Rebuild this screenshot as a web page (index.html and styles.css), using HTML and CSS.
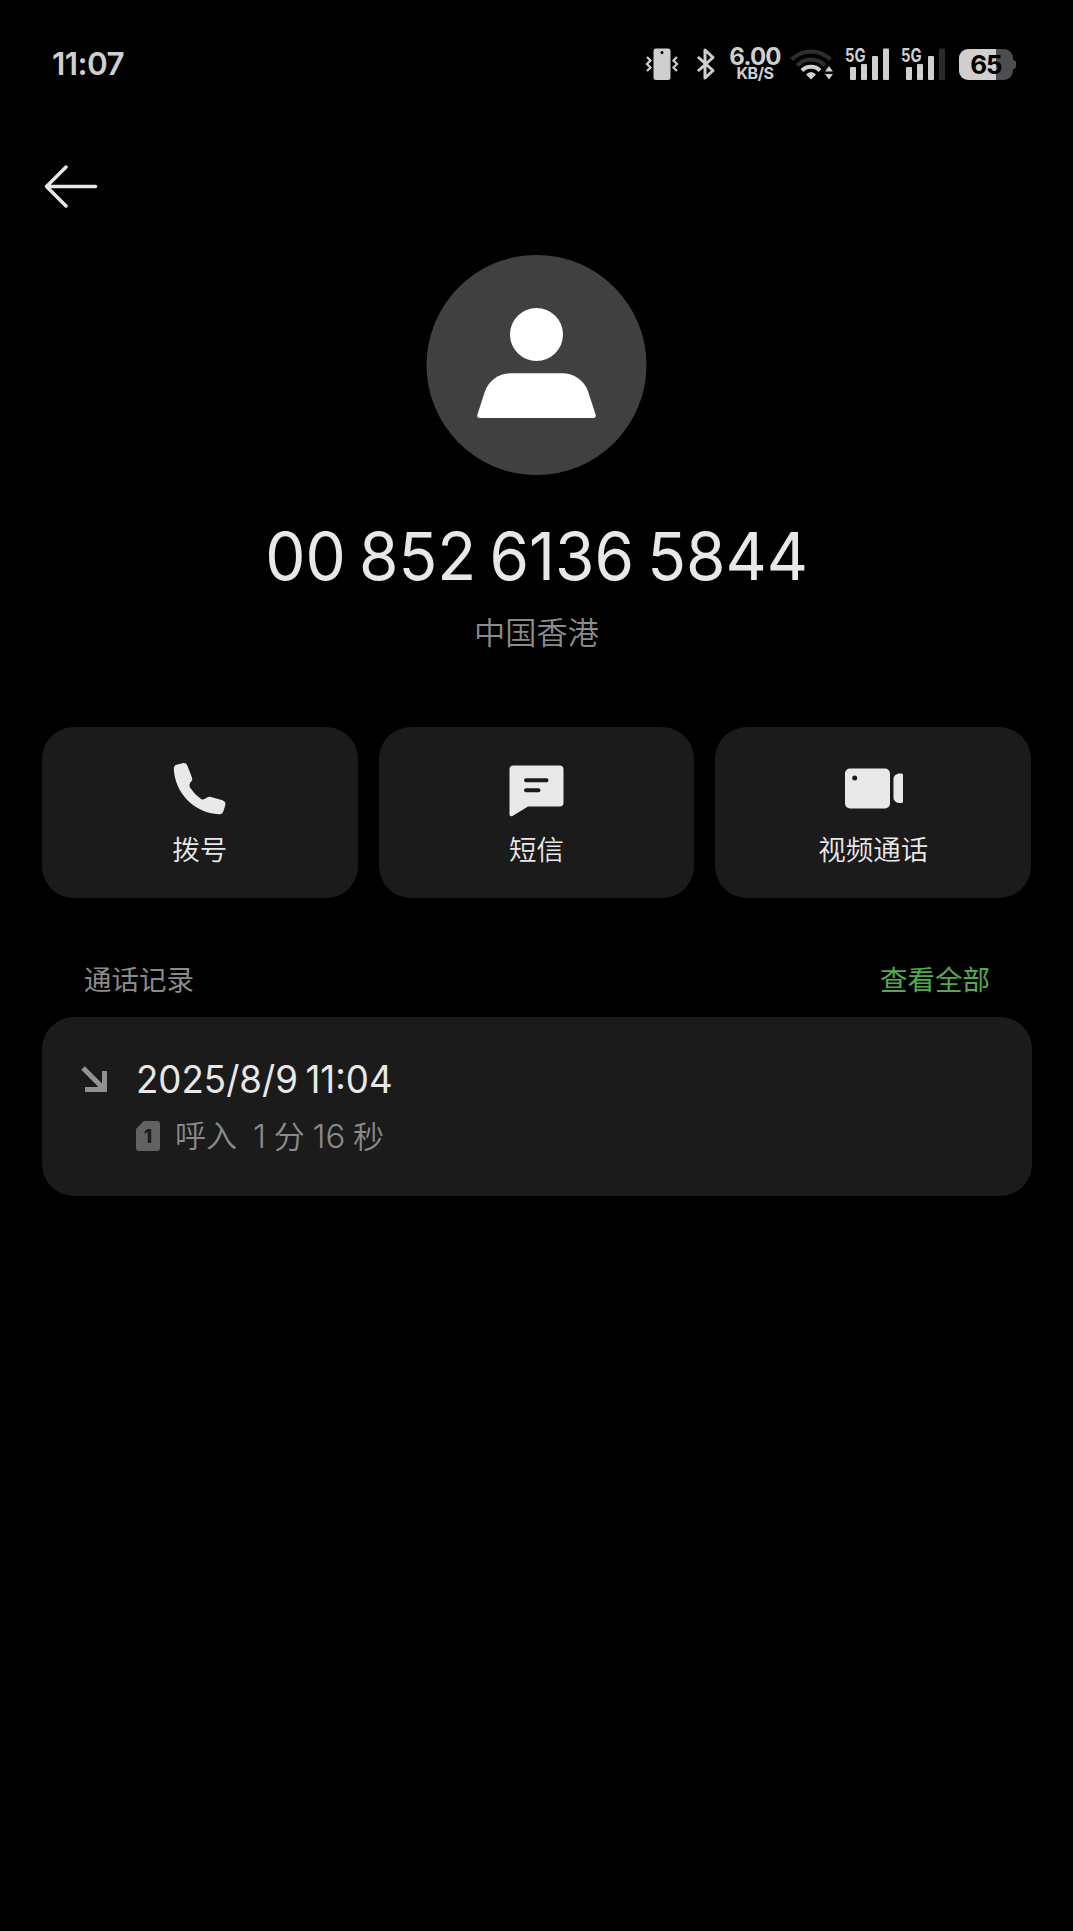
FILE: index.html
```
<!DOCTYPE html>
<html lang="zh-CN">
<head>
    <meta charset="UTF-8">
    <meta name="viewport" content="width=device-width, initial-scale=1.0">
    <title>通话详情</title>
    <link rel="stylesheet" href="styles.css">
</head>
<body>
    <div class="status">
        <span class="time">11:07</span>
        <div class="icons">
            <!-- 振动 -->
            <svg class="vibrate" width="34" height="34" viewBox="0 0 34 34">
                <rect x="8.500" y="1.500" width="17" height="31.500" rx="2.500" fill="#cfcfcf"/>
                <circle cx="17" cy="5.500" r="1.500" fill="#000"/>
                <path d="M2 10l3.500 3.500-3.500 3.500 3.500 3.500-3.500 3.500M32 10l-3.500 3.500 3.500 3.500-3.500 3.500 3.500 3.500" fill="none" stroke="#cfcfcf" stroke-width="2.200"/>
            </svg>
            <!-- 蓝牙 -->
            <svg class="bluetooth" width="20" height="34" viewBox="0 0 20 34">
                <path d="M2 10l15 13.500-8 7.500V3l8 7.500L2 24" fill="none" stroke="#cfcfcf" stroke-width="3" stroke-linejoin="round"/>
            </svg>
            <div class="speed">
                <b>6.00</b>
                <i>KB/S</i>
            </div>
            <svg class="wifi" width="44" height="34" viewBox="0 0 44 34">
                <path d="M1.500 12.500a27.500 27.500 0 0 1 39 0M7 18.500a19.500 19.500 0 0 1 28 0" fill="none" stroke="#2e2e2e" stroke-width="4"/>
                <path d="M12 23.500a12.500 12.500 0 0 1 18 0" fill="none" stroke="#cfcfcf" stroke-width="4"/>
                <path d="M16 27.500q5-5 10 0l-5 5zM35 24.500l4-5.500 4 5.500zM35 27l4 5.500 4-5.500z" fill="#cfcfcf"/>
            </svg>
            <div class="signal">
                <span>5G</span>
                <svg width="40" height="34" viewBox="0 0 40 34" fill="#cfcfcf">
                    <rect x="1" y="20" width="6" height="13" rx="1"/>
                    <rect x="12" y="17" width="6" height="16" rx="1"/>
                    <rect x="23" y="9" width="6" height="24" rx="1"/>
                    <rect x="34" y="1.500" width="6" height="31.500" rx="1"/>
                </svg>
            </div>
            <div class="signal second">
                <span>5G</span>
                <svg width="40" height="34" viewBox="0 0 40 34" fill="#cfcfcf">
                    <rect x="1" y="20" width="6" height="13" rx="1"/>
                    <rect x="12" y="17" width="6" height="16" rx="1"/>
                    <rect x="23" y="9" width="6" height="24" rx="1"/>
                    <rect x="34" y="1.500" width="6" height="31.500" rx="1" fill="#2b2b2b"/>
                </svg>
            </div>
            <div class="battery"><span>65</span></div>
        </div>
    </div>

    <div class="nav">
        <svg width="54" height="44" viewBox="0 0 54 44">
            <path d="M51.500 21.500H2.500M22 2L2.500 21.500 22 41" fill="none" stroke="#e8e6e6" stroke-width="3.500" stroke-linecap="round" stroke-linejoin="round"/>
        </svg>
    </div>

    <div class="person">
        <svg class="avatar" width="221" height="221" viewBox="0 0 221 221">
            <circle cx="110.500" cy="110" r="110" fill="#404040"/>
            <circle cx="110.500" cy="79.500" r="26.500" fill="#fff"/>
            <path d="M85 118.300h51c12 0 22 7 26 18l7.500 23q1 3.700-2.500 3.700H54q-3.500 0-2.500-3.700L59 136.300c4-11 14-18 26-18z" fill="#fff"/>
        </svg>
        <div class="number"><span>00 852 6136 5844</span></div>
        <div class="area">中国香港</div>
    </div>

    <div class="actions">
        <div class="card">
            <svg width="60" height="60" viewBox="0 0 60 60">
                <path d="M6.500 4.700L12.500 3.200Q16 2.500 17.300 5.500L22 17.500Q22.800 19.800 21.300 21.500Q18.500 24 20 27.500Q24.500 34.500 31 39Q33 40.300 35 38.800L37.500 37.300Q39 36.500 41 37L52.500 40.300Q56.300 41.800 55.200 45.500L53.300 51.500Q52.300 54.500 49 54.300C24 53 5 33 3.800 9Q3.800 5.500 6.500 4.700z" fill="#e9e9e9"/>
            </svg>
            <p>拨号</p>
        </div>
        <div class="card">
            <svg width="60" height="60" viewBox="0 0 60 60">
                <path d="M7.500 5.500h46q4 0 4 4v33q0 4-4 4H22L6.500 56q-3 1-3-1.500v-45q0-4 4-4z" fill="#e9e9e9"/>
                <path d="M20 20.200h20.500M20 30.200h12.500" stroke="#1b1b1b" stroke-width="4" stroke-linecap="round"/>
            </svg>
            <p>短信</p>
        </div>
        <div class="card">
            <svg width="60" height="60" viewBox="0 0 60 60">
                <rect x="2" y="8.500" width="45" height="40" rx="5" fill="#e9e9e9"/>
                <circle cx="11.700" cy="18" r="2.500" fill="#1b1b1b"/>
                <path d="M55.500 13.500h3q1.500 0 1.500 1.500v26.500q0 1.500-1.500 1.500h-3q-5-1.500-5-5V18.500q0-3.500 5-5z" fill="#e9e9e9"/>
            </svg>
            <p>视频通话</p>
        </div>
    </div>

    <div class="title">
        <span>通话记录</span>
        <a>查看全部</a>
    </div>

    <div class="record">
        <svg class="incoming" width="28" height="28" viewBox="0 0 28 28">
            <path d="M2 2l20 20M4 23.500h19.500V5" fill="none" stroke="#929292" stroke-width="5"/>
        </svg>
        <div class="info">
            <div class="date"><span>2025/8/9 11:04</span></div>
            <div class="detail">
                <div class="sim"><span>1</span></div>
                <span class="type">呼入</span>
                <span class="long"><em>1</em> 分 <em>16</em> 秒</span>
            </div>
        </div>
    </div>
</body>
</html>
```

FILE: styles.css
```
body{
    margin: 0;
    padding: 0;
    height: 1931px;
    background: #000;
    color: #e8e8e8;
    font-family: Inter, "Noto Sans CJK SC", sans-serif;
    overflow: hidden;
}
svg{
    display: block;
    flex: none;
}
p{
    margin: 0;
}
/* 状态栏 */
.status{
    display: flex;
    justify-content: space-between;
    height: 34px;
    padding: 47px 60px 0 52px;
    color: #cfcfcf;
}
.time{
    font-size: 31.5px;
    line-height: 34px;
    font-weight: 600;
    letter-spacing: -0.6px;
}
.icons{
    display: flex;
}
.bluetooth{
    margin-left: 17px;
}
.speed{
    width: 52px;
    margin-left: 13px;
    text-align: center;
    white-space: nowrap;
}
.speed b{
    display: block;
    font-size: 24px;
    line-height: 20px;
    font-weight: 700;
    letter-spacing: -0.8px;
}
.speed i{
    display: block;
    font-size: 16px;
    line-height: 13px;
    font-style: normal;
    font-weight: 700;
    letter-spacing: -0.5px;
}
.wifi{
    margin-left: 9px;
}
.signal{
    position: relative;
    width: 46px;
    margin-left: 10px;
    padding-left: 5px;
    box-sizing: border-box;
}
.signal span{
    position: absolute;
    left: 1px;
    top: 0;
    font-size: 18.5px;
    line-height: 16px;
    font-weight: 700;
    transform: scaleX(0.8);
    transform-origin: left;
}
.battery{
    position: relative;
    width: 54px;
    height: 31px;
    margin: 2px 0 0 13px;
    border-radius: 9px;
    background: linear-gradient(90deg, #cfcfcf 37px, #4d4d4d 37px);
    color: #000;
    text-align: center;
}
.battery::after{
    content: "";
    position: absolute;
    right: -3px;
    top: 11px;
    width: 3px;
    height: 9px;
    border-radius: 0 3px 3px 0;
    background: #4d4d4d;
}
.battery span{
    font-size: 26px;
    line-height: 31px;
    font-weight: 700;
    letter-spacing: -1px;
}
/* 返回 */
.nav{
    height: 90px;
    padding: 84px 0 0 44px;
}
/* 号码信息 */
.person{
    display: flex;
    flex-direction: column;
    align-items: center;
    height: 472px;
}
.number{
    margin-top: 35px;
    font-size: 66.5px;
    line-height: 90px;
    font-weight: 420;
    word-spacing: -5px;
    white-space: nowrap;
}
.number span{
    display: block;
    transform: scaleX(0.96);
}
.area{
    margin-top: 12px;
    font-size: 31.2px;
    line-height: 40px;
    font-weight: 350;
    color: #8c8c8c;
}
.actions{
    display: grid;
    grid-template-columns: repeat(3, 1fr);
    gap: 21px;
    padding: 0 42px;
}
.card{
    display: flex;
    flex-direction: column;
    align-items: center;
    height: 171px;
    padding-top: 33px;
    box-sizing: border-box;
    border-radius: 32px;
    background: #1b1b1b;
}
.card p{
    margin-top: 10px;
    font-size: 27.5px;
    line-height: 40px;
    font-weight: 350;
}
/* 通话记录 */
.title{
    display: flex;
    justify-content: space-between;
    padding: 62px 83px 0 84px;
    font-size: 27.5px;
    line-height: 40px;
    color: #8a8a8a;
}
.title a{
    color: #53a94e;
}
.record{
    display: flex;
    height: 179px;
    margin: 17px 41px 0 42px;
    padding: 0 39px;
    box-sizing: border-box;
    border-radius: 32px;
    background: #1b1b1b;
}
.incoming{
    margin-top: 49px;
}
.info{
    margin-left: 27px;
}
.date{
    padding-top: 37px;
    font-size: 38px;
    line-height: 50px;
    word-spacing: -3px;
    white-space: nowrap;
}
.date span{
    display: inline-block;
    transform: scaleX(0.965);
    transform-origin: left;
}
.detail{
    display: flex;
    align-items: center;
    height: 40px;
    margin-top: 12px;
    font-size: 31px;
    line-height: 40px;
    font-weight: 350;
    color: #8a8a8a;
    white-space: nowrap;
}
.sim{
    width: 24px;
    height: 30px;
    border-radius: 3px;
    background: #626262;
    clip-path: polygon(8px 0, 100% 0, 100% 100%, 0 100%, 0 8px);
    color: #1b1b1b;
    text-align: center;
}
.sim span{
    display: block;
    font-size: 19px;
    line-height: 31px;
    font-weight: 800;
}
.type{
    margin-left: 15px;
}
.long{
    margin-left: 16px;
    word-spacing: -1px;
}
.long em{
    font-size: 33px;
    font-style: normal;
}
```
